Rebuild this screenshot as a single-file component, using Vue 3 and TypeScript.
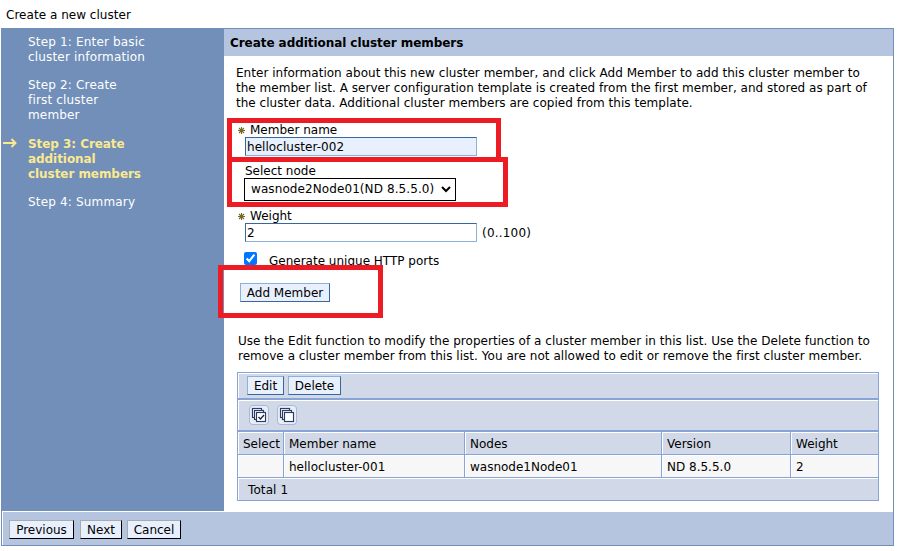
<script setup lang="ts">
import { ref } from 'vue'

interface Step { lines: string[]; kind: string }
interface Member { name: string; node: string; version: string; weight: number }

const steps: Step[] = [
  { lines: ['Step 1: Enter basic', 'cluster information'], kind: 'first' },
  { lines: ['Step 2: Create', 'first cluster', 'member'], kind: 'visited' },
  { lines: ['Step 3: Create', 'additional', 'cluster members'], kind: 'current' },
  { lines: ['Step 4: Summary'], kind: 'next' },
]
const intro = [
  'Enter information about this new cluster member, and click Add Member to add this cluster member to',
  'the member list. A server configuration template is created from the first member, and stored as part of',
  'the cluster data. Additional cluster members are copied from this template.',
]
const note = [
  'Use the Edit function to modify the properties of a cluster member in this list. Use the Delete function to',
  'remove a cluster member from this list. You are not allowed to edit or remove the first cluster member.',
]
const members: Member[] = [
  { name: 'hellocluster-001', node: 'wasnode1Node01', version: 'ND 8.5.5.0', weight: 2 },
]
const memberName = ref('hellocluster-002')
const weight = ref('2')
const node = ref('wasnode2Node01(ND 8.5.5.0)')
const uniquePorts = ref(true)
</script>

<template>
  <main class="page">
    <div class="title">Create a new cluster</div>
    <div class="wizard">
      <div class="body">
        <nav class="steps">
          <div v-for="s in steps" :key="s.lines[0]" class="step" :class="s.kind">
            <svg v-if="s.kind === 'current'" class="arrow" width="14" height="10" viewBox="0 0 14 10">
              <path d="M0 5H12M8.5 1L12.5 5L8.5 9" fill="none" stroke="#fbe98f" stroke-width="1.9" />
            </svg>
            <div v-for="l in s.lines" :key="l" class="line">{{ l }}</div>
          </div>
        </nav>
        <section class="panel">
          <h1>Create additional cluster members</h1>
          <div class="intro"><div v-for="l in intro" :key="l" class="line">{{ l }}</div></div>
          <form class="form" @submit.prevent>
            <label class="label required">
              <svg class="star" width="7" height="7" viewBox="0 0 7 7"><path d="M3.5 0V7M0 3.5H7M1 1L6 6M6 1L1 6" /></svg>
              <span>Member name</span>
            </label>
            <input v-model="memberName" class="field filled" />
            <label class="label node">Select node</label>
            <div class="select">
              <span>{{ node }}</span>
              <svg width="10" height="7" viewBox="0 0 10 7"><path d="M1 1L5 5L9 1" fill="none" stroke="#000" stroke-width="2" /></svg>
            </div>
            <label class="label required weight">
              <svg class="star" width="7" height="7" viewBox="0 0 7 7"><path d="M3.5 0V7M0 3.5H7M1 1L6 6M6 1L1 6" /></svg>
              <span>Weight</span>
            </label>
            <div class="weight-row"><input v-model="weight" class="field" /><span class="range">(0..100)</span></div>
            <label class="check"><input v-model="uniquePorts" type="checkbox" /><span>Generate unique HTTP ports</span></label>
            <button class="btn add">Add Member</button>
          </form>
          <div class="note"><div v-for="l in note" :key="l" class="line">{{ l }}</div></div>
          <div class="table">
            <div class="bar actions"><button class="btn edit">Edit</button><button class="btn delete">Delete</button></div>
            <div class="bar tools">
              <span class="tool"><svg width="20" height="20" viewBox="0 0 20 20">
                <rect class="sheet" x="3.5" y="3.5" width="9" height="9" /><rect class="sheet" x="5.5" y="5.5" width="9" height="9" />
                <rect class="sheet" x="7.5" y="7.5" width="9" height="9" />
                <path class="tick" d="M9.5 12L11.5 14L15 10" />
              </svg></span>
              <span class="tool"><svg width="20" height="20" viewBox="0 0 20 20">
                <rect class="sheet" x="3.5" y="3.5" width="9" height="9" /><rect class="sheet" x="5.5" y="5.5" width="9" height="9" />
                <rect class="sheet" x="7.5" y="7.5" width="9" height="9" />
              </svg></span>
            </div>
            <div class="grid head">
              <div>Select</div><div>Member name</div><div>Nodes</div><div>Version</div><div>Weight</div>
            </div>
            <div v-for="m in members" :key="m.name" class="grid row">
              <div></div><div>{{ m.name }}</div><div>{{ m.node }}</div><div>{{ m.version }}</div><div>{{ m.weight }}</div>
            </div>
            <div class="bar total">Total {{ members.length }}</div>
          </div>
        </section>
      </div>
      <footer class="footer">
        <button class="nav prev">Previous</button><button class="nav next-btn">Next</button><button class="nav cancel">Cancel</button>
      </footer>
    </div>
    <div class="mark mark-name"></div>
    <div class="mark mark-node"></div>
    <div class="mark mark-add"></div>
  </main>
</template>

<style>
body { background: #fff; }
</style>
<style scoped>
.page, .page * { box-sizing: border-box; }
.page { position: relative; width: 901px; height: 551px; overflow: hidden; font: 12px/15px "DejaVu Sans", sans-serif; color: #000; white-space: nowrap; }
input, button { font: inherit; color: inherit; margin: 0; }
.title { height: 28px; padding: 8px 0 0 6px; letter-spacing: 0.03px; }
.wizard { width: 893px; height: 518px; margin-left: 1px; border: 1px solid #718fb9; }
.body { display: flex; height: 482px; }
.steps { width: 222px; background: #718fb9; color: #fff; padding: 6px 0 0 26px; letter-spacing: 0.17px; }
.step { position: relative; margin-bottom: 13px; }
.step.visited { margin-bottom: 14px; }
.step.current { color: #fbe98f; font-weight: bold; letter-spacing: -0.06px; }
.arrow { position: absolute; left: -25px; top: 1px; }
.panel { flex: 1; }
h1 { margin: 0; height: 27px; padding: 7px 0 0 6px; background: #b5c5df; font-size: 12px; line-height: 15px; letter-spacing: -0.06px; }
.intro { padding: 10px 0 0 12px; letter-spacing: 0.028px; }
.form { display: flex; flex-direction: column; align-items: flex-start; padding: 11px 0 0 14px; }
.label { display: flex; align-items: center; height: 15px; margin-left: 7px; padding-top: 2px; }
.required { margin-left: 0; }
.star { margin-right: 5px; flex: none; }
.star path { stroke: #75691f; stroke-width: 1.1; fill: none; }
.field { display: block; width: 232px; height: 19px; margin-left: 7px; padding: 0 1px; background: #fff; border: 1px solid; border-color: #36679f #8cb0d6 #8cb0d6 #36679f; outline: 0; letter-spacing: 0.05px; }
.filled { background: #e8f0fe; }
.node { margin-top: 7px; }
.select { display: flex; align-items: center; justify-content: space-between; width: 212px; height: 23px; margin-left: 6px; padding: 0 4px 0 6px; border: 1px solid #000; letter-spacing: 0.09px; }
.weight { margin-top: 7px; }
.weight-row { display: flex; align-items: center; gap: 5px; }
.range { padding-top: 1px; letter-spacing: 0.2px; }
.check { display: flex; align-items: flex-start; margin: 9px 0 0 6px; height: 15px; }
.check input { width: 13px; height: 13px; margin: 1px 12px 0 0; }
.check span { margin-top: 3px; }
.btn, .nav { height: 19px; padding: 1px 0 0; text-align: center; line-height: 16px; background: #e8f0fe; border: 1px solid; }
.btn { border-color: #8cb0d6 #36679f #36679f #8cb0d6; }
.add { width: 90px; margin: 17px 0 0 2px; }
.note { padding: 32px 0 0 14px; letter-spacing: 0.035px; }
.table { width: 642px; margin: 8px 0 0 13px; border: 1px solid #88a4d7; }
.bar { display: flex; background: #d1d9e8; border-top: 1px solid #fff; border-left: 1px solid #fff; }
.actions { height: 25px; padding: 2px 0 0 8px; gap: 4px; }
.edit { width: 37px; }
.delete { width: 53px; }
.tools { height: 30px; margin-top: 2px; padding: 4px 0 0 10px; gap: 8px; box-shadow: 0 -2px #88a4d7; }
.tool { width: 20px; height: 20px; border-radius: 4px; background: #e8edf6; box-shadow: inset 0 0 0 1px #a7b9d3; }
.tool svg { display: block; }
.sheet { fill: #fff; stroke: #2b3c6b; stroke-width: 1.15; }
.tick { fill: none; stroke: #222; stroke-width: 1.3; }
.grid { display: grid; grid-template-columns: 45px 180px 196px 128px 87px; gap: 1px; background: #88a4d7; }
.grid > div { height: 22px; padding: 4px 0 0 4px; border-top: 1px solid #fff; border-left: 1px solid #fff; background: #d1d9e8; }
.head { padding-top: 2px; }
.row { padding-top: 1px; }
.row > div { background: #f7f7f7; }
.total { height: 22px; margin-top: 1px; padding: 4px 0 0 9px; box-shadow: 0 -1px #88a4d7; letter-spacing: 0.1px; }
.footer { display: flex; height: 34px; background: #b5c5df; border-top: 1px solid #fff; border-left: 1px solid #fff; padding: 8px 0 0 6px; }
.nav { border-color: #aaa #000 #000 #aaa; }
.prev { width: 65px; margin-right: 6px; }
.next-btn { width: 42px; margin-right: 5px; }
.cancel { width: 54px; }
.mark { position: absolute; border: 5px solid #ed1c24; }
.mark-name { left: 227px; top: 118px; width: 274px; height: 44px; }
.mark-node { left: 227px; top: 157px; width: 281px; height: 50px; }
.mark-add { left: 218px; top: 265px; width: 165px; height: 53px; }
</style>
